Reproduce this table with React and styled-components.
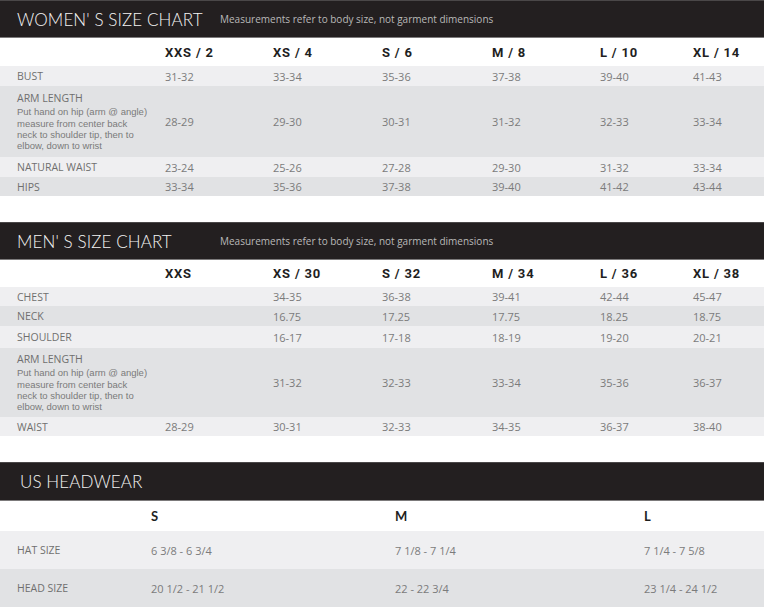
import styled, { createGlobalStyle } from "styled-components";

const GlobalStyle = createGlobalStyle`
  body {
    margin: 0;
    background: #ffffff;
    font-family: "Open Sans", "Liberation Sans", sans-serif;
  }
`;

const Page = styled.div`
  width: 764px;
  display: flex;
  flex-direction: column;
`;

const Section = styled.section`
  display: flex;
  flex-direction: column;
  margin-bottom: ${(p) => p.$gap || 0}px;
`;

const HeaderBar = styled.div`
  height: ${(p) => p.$height || 38}px;
  background: #231f20;
  border-top: 1px solid #4a4748;
  border-bottom: 1px solid #7c7a7b;
  box-sizing: border-box;
  display: flex;
  align-items: center;
  padding-left: ${(p) => p.$pad || 17}px;
  gap: 17px;
`;

const Title = styled.h2`
  margin: 0;
  width: ${(p) => (p.$fixed ? "186px" : "auto")};
  font-family: Lato, "Open Sans", sans-serif;
  font-weight: 300;
  font-size: 17px;
  letter-spacing: 0.1px;
  color: #f4f4f4;
  white-space: nowrap;
`;

const Note = styled.span`
  font-family: "Open Sans", "Liberation Sans", sans-serif;
  font-size: 10px;
  color: #b9b9b9;
  white-space: nowrap;
`;

const Row = styled.div`
  display: grid;
  grid-template-columns: ${(p) => p.$cols};
  align-items: center;
  height: ${(p) => p.$h}px;
  background: ${(p) =>
    p.$tone === "light" ? "#efeff1" : p.$tone === "dark" ? "#e1e2e4" : "#ffffff"};
`;

const Label = styled.div`
  padding-left: 17px;
  font-family: "Open Sans", "Liberation Sans", sans-serif;
  font-size: 10.5px;
  color: #6f6f6f;
  text-transform: uppercase;
`;

const LabelHint = styled.div`
  font-family: "Liberation Sans", Arial, sans-serif;
  font-size: 9.5px;
  line-height: 11.4px;
  text-transform: none;
  color: #7a7a7a;
  margin-top: 1px;
`;

const Cell = styled.div`
  font-family: "Open Sans", "Liberation Sans", sans-serif;
  font-size: 11px;
  color: #7b7b7b;
  white-space: nowrap;
`;

const Head = styled.div`
  font-family: ${(p) => (p.$round ? "Lato" : "Roboto")}, "Liberation Sans", sans-serif;
  font-weight: 700;
  font-size: 13px;
  letter-spacing: ${(p) => (p.$round ? 0 : 0.8)}px;
  color: #1f1f1f;
  white-space: nowrap;
`;

const SIZE_COLS = "165px 108px 109px 110px 108px 93px 1fr";
const HAT_COLS = "151px 244px 249px 1fr";

const women = {
  title: "WOMEN' S SIZE CHART",
  sizes: ["XXS / 2", "XS / 4", "S / 6", "M / 8", "L / 10", "XL / 14"],
  rows: [
    { label: "Bust", h: 20, values: ["31-32", "33-34", "35-36", "37-38", "39-40", "41-43"] },
    { label: "Arm length", h: 71, arm: true, values: ["28-29", "29-30", "30-31", "31-32", "32-33", "33-34"] },
    { label: "Natural waist", h: 20, values: ["23-24", "25-26", "27-28", "29-30", "31-32", "33-34"] },
    { label: "Hips", h: 19, values: ["33-34", "35-36", "37-38", "39-40", "41-42", "43-44"] },
  ],
};

const men = {
  title: "MEN' S SIZE CHART",
  sizes: ["XXS", "XS / 30", "S / 32", "M / 34", "L / 36", "XL / 38"],
  rows: [
    { label: "Chest", h: 19, values: ["", "34-35", "36-38", "39-41", "42-44", "45-47"] },
    { label: "Neck", h: 20, values: ["", "16.75", "17.25", "17.75", "18.25", "18.75"] },
    { label: "Shoulder", h: 22, values: ["", "16-17", "17-18", "18-19", "19-20", "20-21"] },
    { label: "Arm length", h: 69, arm: true, values: ["", "31-32", "32-33", "33-34", "35-36", "36-37"] },
    { label: "Waist", h: 19, values: ["28-29", "30-31", "32-33", "34-35", "36-37", "38-40"] },
  ],
};

const hats = [
  { label: "Hat size", values: ["6 3/8 - 6 3/4", "7 1/8 - 7 1/4", "7 1/4 - 7 5/8"] },
  { label: "Head size", values: ["20 1/2 - 21 1/2", "22 - 22 3/4", "23 1/4 - 24 1/2"] },
];

function SizeChart({ chart, headRow }) {
  return (
    <Section $gap={26}>
      <HeaderBar>
        <Title $fixed>{chart.title}</Title>
        <Note>Measurements refer to body size, not garment dimensions</Note>
      </HeaderBar>
      <Row $cols={SIZE_COLS} $h={headRow}>
        <div />
        {chart.sizes.map((s) => (
          <Head key={s}>{s}</Head>
        ))}
      </Row>
      {chart.rows.map((row, i) => (
        <Row key={row.label} $cols={SIZE_COLS} $h={row.h} $tone={i % 2 ? "dark" : "light"}>
          <Label>
            {row.label}
            {row.arm && (
              <LabelHint>
                Put hand on hip (arm @ angle)
                <br />
                measure from center back
                <br />
                neck to shoulder tip, then to
                <br />
                elbow, down to wrist
              </LabelHint>
            )}
          </Label>
          {row.values.map((v, j) => (
            <Cell key={j}>{v}</Cell>
          ))}
        </Row>
      ))}
    </Section>
  );
}

export default function App() {
  return (
    <>
      <GlobalStyle />
      <Page>
        <SizeChart chart={women} headRow={28} />
        <SizeChart chart={men} headRow={27} />
        <Section>
          <HeaderBar $height={39} $pad={20}>
            <Title>US HEADWEAR</Title>
          </HeaderBar>
          <Row $cols={HAT_COLS} $h={30}>
            <div />
            {["S", "M", "L"].map((s) => (
              <Head key={s} $round>
                {s}
              </Head>
            ))}
          </Row>
          {hats.map((row, i) => (
            <Row key={row.label} $cols={HAT_COLS} $h={38} $tone={i % 2 ? "dark" : "light"}>
              <Label>{row.label}</Label>
              {row.values.map((v) => (
                <Cell key={v}>{v}</Cell>
              ))}
            </Row>
          ))}
        </Section>
      </Page>
    </>
  );
}
